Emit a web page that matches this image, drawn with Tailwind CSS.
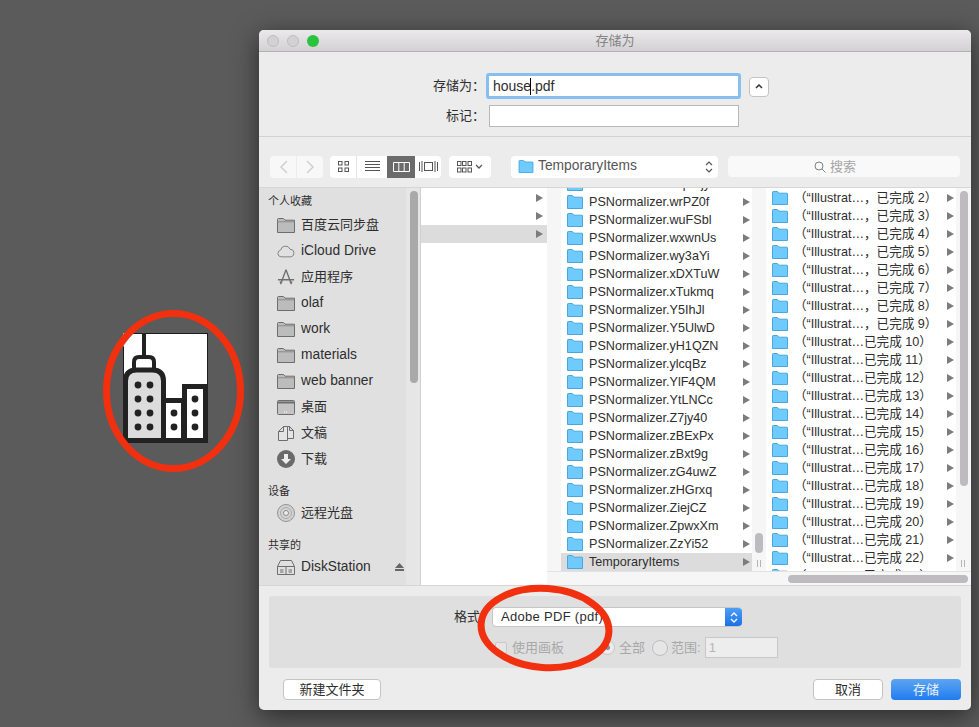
<!DOCTYPE html>
<html lang="en">
  <head>
    <meta charset="UTF-8" />
    <title>存储为</title>
    <script src="https://cdn.jsdelivr.net/npm/@tailwindcss/browser@4"></script>
  </head>
  <body class="relative w-[979px] h-[727px] overflow-hidden bg-[#5b5b5b] text-[#2e2e2e] text-[13px] font-['Liberation_Sans','Noto_Sans_CJK_SC',sans-serif]">
    <svg class="hidden">
      <symbol id="blue-folder" viewBox="0 0 16 14">
        <path d="M.5 13.5V1.2q0-.7.7-.7h4.2l1.600 1.700h8q.5 0 .5.600v10.700z" fill="#6fcbfd" stroke="#4ba6dc" />
      </symbol>
      <symbol id="grey-folder" viewBox="0 0 18 15">
        <path d="M.5 14.5V1.5q0-1 1-1h5l1.500 1.700h9.500v12.300z" fill="#bdbcbc" stroke="#6d6d6d" />
        <path d="M.5 3.800h17" stroke="#8a8a8a" fill="none" />
      </symbol>
      <symbol id="arrow" viewBox="0 0 7 8"><path d="M0 0l7 4-7 4z" fill="#7c7c7c" /></symbol>
    </svg>

    <!-- City icon with the red marker round it -->
    <svg class="absolute left-[123px] top-[333px]" width="85" height="110" viewBox="0 0 85 110">
      <rect x="0.500" y="0.500" width="84" height="109" fill="#fff" stroke="#1c1c1c" />
      <path d="M0 14L0 0 10 0z" fill="#b9b9b9" />
      <path d="M21 0v24" stroke="#222" stroke-width="4" />
      <path d="M11 37v-8q0-5 5-5h10q5 0 5 5v8" fill="#fff" stroke="#222" stroke-width="4" />
      <path d="M2.500 107.500V48q0-11 11-11h16q11 0 11 11v59.500z" fill="#dcdcdc" stroke="#222" stroke-width="5" />
      <path d="M40.500 67.500h20v40h-20z" fill="#fff" stroke="#222" stroke-width="5" />
      <path d="M61.500 53.500h21v54h-21z" fill="#fff" stroke="#222" stroke-width="5" />
      <g fill="#222">
        <circle cx="15" cy="52" r="3.400" /><circle cx="27" cy="52" r="3.400" />
        <circle cx="15" cy="66" r="3.400" /><circle cx="27" cy="66" r="3.400" />
        <circle cx="15" cy="80" r="3.400" /><circle cx="27" cy="80" r="3.400" />
        <circle cx="15" cy="94" r="3.400" /><circle cx="27" cy="94" r="3.400" />
        <circle cx="51" cy="80" r="3.400" /><circle cx="51" cy="94" r="3.400" />
        <circle cx="72" cy="66" r="3.400" /><circle cx="72" cy="80" r="3.400" /><circle cx="72" cy="94" r="3.400" />
      </g>
    </svg>

    <!-- Save dialog -->
    <div class="absolute left-[259px] top-[30px] w-[712px] h-[680px] flex flex-col rounded-[5px] overflow-hidden bg-[#ececec] shadow-[0_6px_26px_rgba(0,0,0,0.55)]">
      <!-- Title bar -->
      <div class="relative h-[22px] shrink-0 flex items-center justify-center bg-gradient-to-b from-[#ebe9eb] to-[#d3d1d3] border-b border-[#b1b1b1] text-[13px] text-[#858585]">
        <div class="absolute left-[8px] top-[5px] flex gap-[8px]">
          <span class="w-[12px] h-[12px] rounded-full bg-[#d3d2d3] border border-[#bdbcbd]"></span>
          <span class="w-[12px] h-[12px] rounded-full bg-[#d3d2d3] border border-[#bdbcbd]"></span>
          <span class="w-[12px] h-[12px] rounded-full bg-[#2ac33e]"></span>
        </div>
        存储为
      </div>

      <!-- Name and tags -->
      <div class="h-[85px] shrink-0 pt-[21px] border-b border-[#d2d2d2]">
        <div class="flex items-center h-[26px]">
          <label class="w-[226px] text-right">存储为：</label>
          <div class="relative ml-px w-[255px] h-[26px] flex items-center pl-[4px] bg-white border-[3px] border-[#86bff0] rounded-[3px] text-[14px]">
            house.pdf
            <span class="absolute left-[41px] top-[2px] w-px h-[17px] bg-black"></span>
          </div>
          <button class="ml-[8px] mt-px w-[20px] h-[20px] flex items-center justify-center bg-white border border-[#c4c4c4] rounded-[4px]">
            <svg width="8" height="5" viewBox="0 0 8 5"><path d="M1 4l3-3 3 3" fill="none" stroke="#333" stroke-width="1.500" /></svg>
          </button>
        </div>
        <div class="flex items-center h-[22px] mt-[6px]">
          <label class="w-[226px] text-right">标记：</label>
          <div class="ml-[4px] w-[250px] h-[22px] bg-white border border-[#b8b8b8]"></div>
        </div>
      </div>

      <!-- Toolbar -->
      <div class="h-[50px] shrink-0 flex items-center pl-[11px] pt-[9px]">
        <div class="flex gap-px">
          <button class="w-[26px] h-[22px] flex items-center justify-center bg-[#f8f8f8] rounded-l-[4px]">
            <svg width="9" height="14" viewBox="0 0 9 14"><path d="M8 1L2 7l6 6" fill="none" stroke="#d0d0d0" stroke-width="1.500" /></svg>
          </button>
          <button class="w-[26px] h-[22px] flex items-center justify-center bg-[#f8f8f8] rounded-r-[4px]">
            <svg width="9" height="14" viewBox="0 0 9 14"><path d="M1 1l6 6-6 6" fill="none" stroke="#d0d0d0" stroke-width="1.500" /></svg>
          </button>
        </div>
        <div class="ml-[7px] w-[111px] h-[22px] flex bg-white rounded-[4px] overflow-hidden">
          <div class="w-[27px] flex items-center justify-center border-r border-[#e4e4e4]">
            <svg width="11" height="11" viewBox="0 0 11 11" fill="none" stroke="#555"><rect x="0.500" y="0.500" width="3.500" height="3.500" /><rect x="7" y="0.500" width="3.500" height="3.500" /><rect x="0.500" y="7" width="3.500" height="3.500" /><rect x="7" y="7" width="3.500" height="3.500" /></svg>
          </div>
          <div class="w-[30px] flex items-center justify-center">
            <svg width="15" height="11" viewBox="0 0 15 11" stroke="#555"><path d="M0 .5h15M0 3.500h15M0 6.500h15M0 9.500h15" /></svg>
          </div>
          <div class="w-[28px] flex items-center justify-center bg-[#6b6b6b]">
            <svg width="17" height="10" viewBox="0 0 17 10" fill="none" stroke="#fff"><path d="M.5.500h16v9H.5zM5.800.500v9M11.200.500v9" /></svg>
          </div>
          <div class="flex-1 flex items-center justify-center">
            <svg width="19" height="11" viewBox="0 0 19 11" fill="none" stroke="#555"><path d="M.5 1v9M3 0v11M16 0v11M18.500 1v9" /><rect x="5.500" y="1.500" width="8" height="8" /></svg>
          </div>
        </div>
        <button class="ml-[8px] w-[42px] h-[22px] flex items-center justify-center gap-[3px] bg-white rounded-[4px]">
          <svg width="15" height="12" viewBox="0 0 15 12" fill="none" stroke="#555"><rect x="0.500" y="0.500" width="3.500" height="4" /><rect x="5.500" y="0.500" width="3.500" height="4" /><rect x="11" y="0.500" width="3.500" height="4" /><rect x="0.500" y="7" width="3.500" height="4" /><rect x="5.500" y="7" width="3.500" height="4" /><rect x="11" y="7" width="3.500" height="4" /></svg>
          <svg width="8" height="5" viewBox="0 0 8 5"><path d="M1 1l3 3 3-3" fill="none" stroke="#555" stroke-width="1.300" /></svg>
        </button>
        <button class="ml-[20px] w-[207px] h-[22px] flex items-center pl-[7px] pr-[5px] gap-[4px] bg-white rounded-[4px] text-[13.8px] text-[#555]">
          <svg width="16" height="13"><use href="#blue-folder" /></svg>
          <span class="flex-1 text-left">TemporaryItems</span>
          <svg width="8" height="14" viewBox="0 0 8 14"><path d="M1 5l3-3 3 3M1 9l3 3 3-3" fill="none" stroke="#555" stroke-width="1.200" /></svg>
        </button>
        <div class="ml-[10px] w-[232px] h-[21px] flex items-center justify-center gap-[4px] pr-[18px] bg-[#f9f9f9] rounded-[4px] text-[#a6a6a6]">
          <svg width="12" height="12" viewBox="0 0 12 12" fill="none" stroke="#808080"><circle cx="5" cy="5" r="4" /><path d="M8 8l3.500 3.500" /></svg>
          搜索
        </div>
      </div>

      <!-- Browser -->
      <div class="h-[399px] shrink-0 flex border-y border-[#d6d6d6]">
        <aside class="w-[147px] shrink-0 overflow-hidden bg-[#e0e0e0] pl-[9px]">
          <div id="sidebar"></div>
        </aside>
        <div class="relative w-[15px] shrink-0 bg-[#e6e6e6] border-r border-[#d0d0d0]">
          <div class="absolute left-[4px] top-[3px] w-[8px] h-[192px] rounded-full bg-[#a9a9a9]"></div>
        </div>
        <div id="column-one" class="w-[126px] shrink-0 bg-white pt-px"></div>
        <div class="flex-1 flex flex-col bg-[#f6f6f6]">
          <div class="h-[383px] flex">
            <div class="w-[14px] shrink-0"></div>
            <div class="w-[191px] shrink-0 overflow-hidden bg-white">
              <div id="column-two" class="mt-[-13px]"></div>
            </div>
            <div class="relative w-[14px] shrink-0">
              <div class="absolute left-[3px] top-[345px] w-[8px] h-[20px] rounded-full bg-[#bdbbc0]"></div>
              <div class="absolute left-[5px] top-[372px] w-[4px] h-[7px] border-x border-[#b5b5b5]"></div>
            </div>
            <div id="column-three" class="w-[190px] shrink-0 overflow-hidden bg-white pt-px"></div>
            <div class="relative flex-1">
              <div class="absolute left-[4px] top-[3px] w-[8px] h-[295px] rounded-full bg-[#bdbbc0]"></div>
              <div class="absolute left-[5px] top-[372px] w-[4px] h-[7px] border-x border-[#b5b5b5]"></div>
            </div>
          </div>
          <div class="flex-1 relative border-t border-[#e2e2e2]">
            <div class="absolute left-[241px] right-[3px] top-[3px] h-[8px] rounded-full bg-[#bdbbc0]"></div>
          </div>
        </div>
      </div>

      <!-- Format panel -->
      <div class="flex-1 px-[10px] pt-[10px]">
        <div class="h-[72px] rounded-[3px] bg-[#dfdfdf] pt-[11px]">
          <div class="flex items-center h-[20px]">
            <span class="w-[211px] text-right">格式</span>
            <div class="ml-[12px] w-[250px] h-[20px] flex bg-white border border-[#c6c6c6] border-r-0 rounded-[4px] overflow-hidden">
              <span class="flex-1 pl-[8px] leading-[18px] tracking-[0.3px]">Adobe PDF (pdf)</span>
              <span class="w-[17px] flex items-center justify-center bg-gradient-to-b from-[#4b9ef8] to-[#1c70e4]">
                <svg width="8" height="13" viewBox="0 0 8 13"><path d="M1 5l3-3 3 3M1 8l3 3 3-3" fill="none" stroke="#fff" stroke-width="1.300" /></svg>
              </span>
            </div>
          </div>
          <div class="flex items-center h-[21px] mt-[10px] text-[#a8a8a8]">
            <span class="ml-[226px] w-[12px] h-[12px] bg-[#e6e6e6] border border-[#c8c8c8] rounded-[2px]"></span>
            <span class="ml-[5px]">使用画板</span>
            <span class="ml-[36px] w-[15px] h-[15px] flex items-center justify-center bg-[#ececec] border border-[#c4c4c4] rounded-full">
              <span class="w-[5px] h-[5px] rounded-full bg-[#8e8e8e]"></span>
            </span>
            <span class="ml-[4px]">全部</span>
            <span class="ml-[7px] w-[16px] h-[16px] bg-[#e6e6e6] border border-[#bdbdbd] rounded-full"></span>
            <span class="ml-[3px]">范围:</span>
            <div class="ml-[4px] w-[73px] h-[21px] pl-[3px] leading-[20px] bg-[#ededed] border border-[#c8c8c8] text-[#b5b5b5]">1</div>
          </div>
        </div>
        <div class="flex items-center mt-[11px] pl-[14px]">
          <button class="w-[98px] h-[21px] bg-white border border-[#c4c4c4] rounded-[4px]">新建文件夹</button>
          <button class="ml-auto w-[70px] h-[21px] bg-white border border-[#c4c4c4] rounded-[4px]">取消</button>
          <button class="ml-[8px] w-[70px] h-[21px] bg-gradient-to-b from-[#5ca4f0] to-[#1e7cf0] rounded-[4px] text-[#e8f1fb]">存储</button>
        </div>
      </div>
    </div>

    <!-- Hand drawn red marks -->
    <svg class="absolute inset-0" width="979" height="727" fill="none" stroke="#f0300f" stroke-width="7">
      <ellipse cx="173.500" cy="391" rx="67" ry="77.500" />
      <ellipse cx="545" cy="628" rx="64" ry="39.500" transform="rotate(4 545 628)" />
    </svg>

    <script>
      const icons = {
        folder: '<svg width="18" height="15"><use href="#grey-folder" /></svg>',
        cloud: '<svg width="20" height="14" viewBox="0 0 20 14"><path d="M4.500 13.500a3.800 3.800 0 0 1-.5-7.500A5.500 5.500 0 0 1 14.500 5a4.300 4.300 0 0 1 1 8.500z" fill="none" stroke="#7a7a7a" /></svg>',
        apps: '<svg width="20" height="18" viewBox="0 0 20 18"><path d="M10 1L4 17M10 1l6 16M1 12h18M3 15l3-1M14 14l3 1" fill="none" stroke="#6f6f6f" stroke-width="1.500" /></svg>',
        desktop: '<svg width="18" height="15" viewBox="0 0 18 15"><rect x="0.500" y="0.500" width="17" height="14" rx="1" fill="#c4c4c4" stroke="#6d6d6d" /><path d="M1 2.500h16" stroke="#6d6d6d" stroke-width="2" /><path d="M7 12h4" stroke="#fff" stroke-dasharray="1 1" /></svg>',
        doc: '<svg width="18" height="17" viewBox="0 0 18 17"><path d="M1.500 6.500l5-5h4v14h-9zM10.500 1.500h2l4 4v8h-6M6.500 1.500v5h-5M12.500 1.500v4h4" fill="#e4e4e4" stroke="#6d6d6d" /></svg>',
        download: '<svg width="18" height="18" viewBox="0 0 18 18"><circle cx="9" cy="9" r="9" fill="#6a6a6a" /><path d="M7 4h4v5h3l-5 5-5-5h3z" fill="#eee" /></svg>',
        disc: '<svg width="18" height="18" viewBox="0 0 18 18"><circle cx="9" cy="9" r="8.500" fill="#d2d2d2" stroke="#929292" /><circle cx="9" cy="9" r="5.500" fill="none" stroke="#ababab" /><circle cx="9" cy="9" r="2.500" fill="#eee" stroke="#8a8a8a" /></svg>',
        server: '<svg width="18" height="15" viewBox="0 0 18 15" fill="none" stroke="#6d6d6d"><path d="M3.500.5h11l3 6v8H.5v-8zM.5 6.500h17M9 6.500v8" /><path d="M3 10h3.500M11.500 10h3.500M3 12h3.500M11.500 12h3.500" /></svg>',
      };

      const sidebar = [
        ["head", "个人收藏"], ["folder", "百度云同步盘"], ["cloud", "iCloud Drive"], ["apps", "应用程序"],
        ["folder", "olaf"], ["folder", "work"], ["folder", "materials"], ["folder", "web banner"],
        ["desktop", "桌面"], ["doc", "文稿"], ["download", "下载"],
        ["head", "设备"], ["disc", "远程光盘"],
        ["head", "共享的"], ["server", "DiskStation"], ["server", ""],
      ];
      document.getElementById("sidebar").innerHTML = sidebar.map(([kind, label], i) => {
        if (kind === "head") {
          const size = i === 0 ? "h-[24px] pb-[3px]" : "h-[28px] pb-px";
          return `<div class="flex items-end text-[11px] ${size}">${label}</div>`;
        }
        const eject = label === "DiskStation"
          ? '<svg class="ml-auto mr-[2px]" width="9" height="8" viewBox="0 0 9 8"><path d="M4.500 0L9 5H0zM0 6h9v2H0z" fill="#666" /></svg>'
          : "";
        const latin = /[a-z]/.test(label) ? "text-[13.8px]" : "";
        return `<div class="flex items-center gap-[6px] h-[26px] pl-[9px]"><span class="w-[18px] flex justify-center">${icons[kind]}</span><span class="${latin}">${label}</span>${eject}</div>`;
      }).join("");

      const arrow = '<svg class="shrink-0" width="7" height="8"><use href="#arrow" /></svg>';
      const row = (label, selected, textClass) =>
        `<div class="flex items-center h-[18px] pl-[6px] pr-[2px] whitespace-nowrap text-[12.6px] ${selected ? "bg-[#dcdcdc]" : ""}"><svg class="shrink-0" width="16" height="14"><use href="#blue-folder" /></svg><span class="flex-1 ${textClass}">${label}</span>${arrow}</div>`;

      document.getElementById("column-one").innerHTML = [0, 1, 2].map((i) =>
        `<div class="flex items-center justify-end h-[18px] pr-[4px] ${i === 2 ? "bg-[#dcdcdc]" : ""}">${arrow}</div>`
      ).join("");

      const names = ["wqK2jy", "wrPZ0f", "wuFSbl", "wxwnUs", "wy3aYi", "xDXTuW", "xTukmq", "Y5IhJl", "Y5UlwD", "yH1QZN", "ylcqBz", "YlF4QM", "YtLNCc", "Z7jy40", "zBExPx", "zBxt9g", "zG4uwZ", "zHGrxq", "ZiejCZ", "ZpwxXm", "ZzYi52"];
      document.getElementById("column-two").innerHTML =
        names.map((n) => row("PSNormalizer." + n, false, "pl-[6px]")).join("") + row("TemporaryItems", true, "pl-[6px]");

      const parts = [];
      for (let n = 2; n <= 23; n++) {
        const label = n < 10 ? `（“Illustrat…，已完成 ${n}）` : `（“Illustrat…已完成 ${n}）`;
        parts.push(row(label, false, "pl-[6px]"));
      }
      document.getElementById("column-three").innerHTML = parts.join("");
    </script>
  </body>
</html>
